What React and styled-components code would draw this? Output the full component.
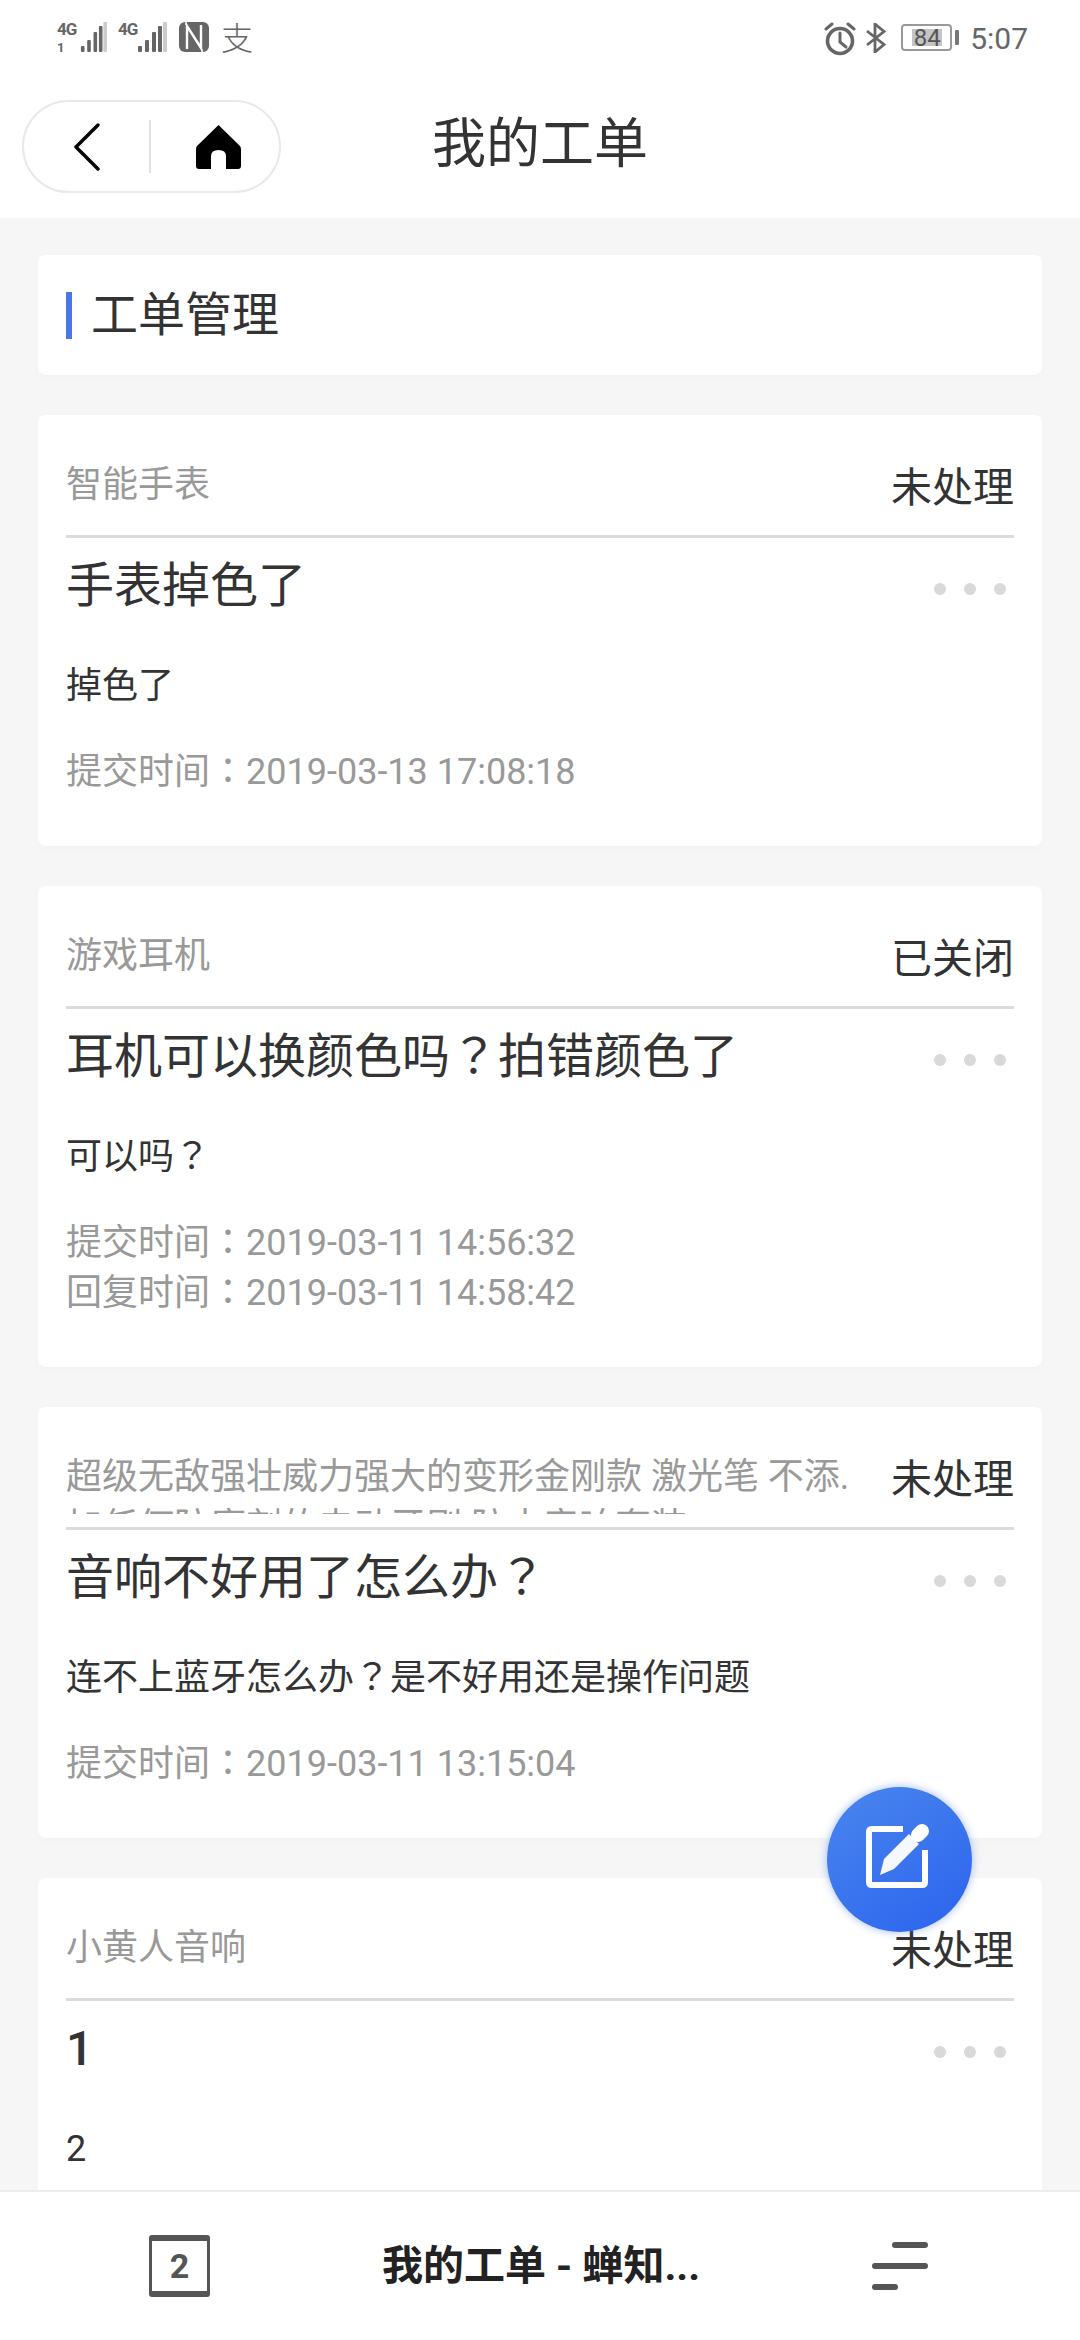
import React from 'react'
import styled, { createGlobalStyle } from 'styled-components'

const GlobalStyle = createGlobalStyle`
  html, body {
    margin: 0;
    padding: 0;
    background: #f6f6f6;
  }
  * { box-sizing: border-box; }
`

const Page = styled.div`
  position: relative;
  width: 1080px;
  height: 2340px;
  display: flex;
  flex-direction: column;
  overflow: hidden;
  background: #f6f6f6;
  color: #333;
  font-family: Roboto, "Noto Sans CJK SC", sans-serif;
`

const StatusBar = styled.div`
  height: 72px;
  flex: none;
  display: flex;
  justify-content: space-between;
  padding: 22px 52px 0 57px;
  background: #fff;
  color: #666;
`

const StatusGroup = styled.div`
  display: flex;
  align-items: flex-start;
`

const Signal = styled.div`
  display: flex;
  align-items: flex-start;
  margin-right: ${p => p.$gap}px;
`

const SignalLabel = styled.div`
  width: ${p => p.$width}px;
  font-size: 17px;
  line-height: 14px;
  font-weight: 700;
  letter-spacing: -1px;
  color: #666;
`

const SimNumber = styled.div`
  margin-top: 7px;
  font-size: 13px;
  line-height: 10px;
`

const PayGlyph = styled.span`
  margin: 1px 0 0 12px;
  font-size: 32px;
  line-height: 32px;
  font-weight: 300;
  color: #666;
`

const Battery = styled.div`
  width: 51px;
  height: 27px;
  margin: 2px 0 0 14px;
  padding: 3px 8px 3px 9px;
  display: flex;
  border: 2px solid #999;
  border-radius: 4px;
`

const BatteryLevel = styled.div`
  flex: 1;
  background: #c4c4c4;
  color: #555;
  font-size: 24px;
  line-height: 18px;
  text-align: center;
`

const BatteryNub = styled.div`
  width: 4px;
  height: 15px;
  margin: 8px 0 0 3px;
  background: #777;
  border-radius: 1px;
`

const Clock = styled.div`
  margin: 1px 0 0 11px;
  font-size: 30px;
  line-height: 32px;
  color: #666;
`

const Header = styled.header`
  height: 146px;
  flex: none;
  display: grid;
  grid-template-columns: 1fr auto 1fr;
  align-items: center;
  padding: 0 22px;
  background: #fff;
`

const NavPill = styled.div`
  width: 259px;
  height: 93px;
  margin-top: 3px;
  display: flex;
  align-items: center;
  border: 2px solid #e9e9e9;
  border-radius: 47px;
`

const BackSlot = styled.div`
  width: 127px;
  height: 53px;
  display: flex;
  align-items: center;
  padding-left: 49px;
  border-right: 2px solid #e2e2e2;
`

const HomeSlot = styled.div`
  flex: 1;
  display: flex;
  justify-content: center;
  padding-left: 6px;
`

const PageTitle = styled.h1`
  margin: 0;
  font-size: 54px;
  line-height: 70px;
  font-weight: 400;
  color: #333;
`

const List = styled.main`
  flex: 1;
  min-height: 0;
  overflow: hidden;
  display: flex;
  flex-direction: column;
  gap: 40px;
  padding: 37px 38px 0;
`

const Panel = styled.section`
  flex: none;
  background: #fff;
  border-radius: 8px;
  box-shadow: 0 4px 14px rgba(0, 0, 0, 0.015);
`

const SectionHead = styled(Panel)`
  height: 120px;
  display: flex;
  align-items: center;
  padding-left: 28px;
`

const AccentBar = styled.div`
  width: 6px;
  height: 47px;
  margin-right: 19px;
  background: #4a77e8;
`

const SectionTitle = styled.h2`
  margin: 0;
  font-size: 47px;
  line-height: 60px;
  font-weight: 400;
  color: #333;
`

const CardHead = styled.div`
  display: flex;
  justify-content: space-between;
  align-items: flex-start;
  margin: 0 28px;
  padding: 45px 0 13px;
  border-bottom: 3px solid #dcdcdc;
`

const Category = styled.div`
  width: 790px;
  height: 62px;
  overflow: hidden;
  font-size: 36px;
  line-height: 50px;
  color: #999;
`

const Status = styled.div`
  margin-top: 3px;
  font-size: 41px;
  line-height: 50px;
  color: #333;
  white-space: nowrap;
`

const CardBody = styled.div`
  padding: 18px 28px 49px;
`

const TitleRow = styled.div`
  display: flex;
  justify-content: space-between;
`

const TicketTitle = styled.div`
  font-size: 48px;
  line-height: 60px;
  color: #333;
  font-weight: ${p => (p.$bold ? 500 : 400)};
`

const Dots = styled.div`
  display: flex;
  gap: 18px;
  margin: 27px 8px 0 0;
`

const Dot = styled.span`
  width: 12px;
  height: 12px;
  border-radius: 50%;
  background: #d9d9d9;
`

const Description = styled.div`
  margin-top: 45px;
  font-size: 36px;
  line-height: 50px;
  color: #333;
`

const Times = styled.div`
  margin-top: 36px;
`

const TimeLine = styled.div`
  font-size: 36px;
  line-height: 50px;
  color: #999;
`

// the ？ and ： sit centred in their cell in the screenshot
const Punct = styled.span`
  font-family: "Noto Sans CJK TC", sans-serif;
  line-height: 0;
`

const Fab = styled.button`
  position: absolute;
  right: 108px;
  bottom: 408px;
  width: 145px;
  height: 145px;
  padding: 0;
  display: flex;
  align-items: center;
  justify-content: center;
  border: none;
  border-radius: 50%;
  background: linear-gradient(145deg, #4a86ee, #2c63ee);
  box-shadow: 0 0 8px rgba(50, 100, 235, 0.45);
`

const BottomBar = styled.footer`
  height: 150px;
  flex: none;
  display: flex;
  align-items: center;
  justify-content: space-between;
  padding: 0 152px 0 149px;
  background: #fff;
  border-top: 2px solid #ececec;
`

const TabCount = styled.div`
  width: 61px;
  height: 62px;
  display: flex;
  align-items: center;
  justify-content: center;
  border-style: solid;
  border-color: #555;
  border-width: 6px 3px;
  border-radius: 3px;
  font-size: 34px;
  font-weight: 700;
  color: #555;
`

const BottomTitle = styled.div`
  font-size: 41px;
  line-height: 56px;
  font-weight: 700;
  color: #222;
`

const MenuLines = styled.div`
  width: 56px;
  display: flex;
  flex-direction: column;
  align-items: flex-end;
  gap: 15px;
`

const MenuLine = styled.div`
  width: ${p => p.$width}px;
  height: 6px;
  margin-right: ${p => p.$inset}px;
  border-radius: 3px;
  background: #555;
`

const SignalBars = ({ width }) => (
  <svg width={width} height="30" viewBox="0 0 30 30" preserveAspectRatio="none">
    <rect x="1" y="24" width="4" height="6" rx="1" fill="#666" />
    <rect x="8" y="18" width="4" height="12" rx="1" fill="#666" />
    <rect x="15" y="10" width="4" height="20" rx="1" fill="#666" />
    <rect x="21" y="4" width="4" height="26" rx="1" fill="#666" />
    <rect x="26" y="0" width="4" height="30" rx="1" fill="#ccc" />
  </svg>
)

const NfcIcon = () => (
  <svg width="30" height="30" viewBox="0 0 30 30" style={{ marginLeft: 12 }}>
    <rect width="30" height="30" rx="6" fill="#666" />
    <path d="M8 27V4L22 26V3" fill="none" stroke="#fff" strokeWidth="2.4" />
    <path d="M7 0V3M23 27V30" stroke="#fff" strokeWidth="1.5" />
  </svg>
)

const AlarmIcon = () => (
  <svg width="32" height="34" viewBox="0 0 32 34" fill="none" stroke="#666" strokeLinecap="round">
    <circle cx="16" cy="19" r="12.5" strokeWidth="3.6" />
    <path d="M16 11V20L22 25" strokeWidth="3" />
    <path d="M2 7L8 2M30 7L24 2" strokeWidth="3" />
  </svg>
)

const BluetoothIcon = () => (
  <svg width="22" height="30" viewBox="0 0 22 30" fill="none" stroke="#666" strokeWidth="2.8" style={{ margin: '1px 0 0 9px' }}>
    <path d="M2 8L19 21.5L10 29V1L19 8.5L2 22" />
  </svg>
)

const BackIcon = () => (
  <svg width="28" height="48" viewBox="0 0 28 48" fill="none" stroke="#000" strokeWidth="3.4" strokeLinecap="round" strokeLinejoin="round">
    <path d="M25 2L3 24L25 46" />
  </svg>
)

const HomeIcon = () => (
  <svg width="45" height="44" viewBox="0 0 45 44">
    <path
      d="M22.5 0L44 21Q45 22 45 25V41Q45 44 42 44H30V31Q30 25 22.5 25Q15 25 15 31V44H3Q0 44 0 41V25Q0 22 1 21Z"
      fill="#000"
    />
  </svg>
)

const EditIcon = () => (
  <svg width="80" height="80" viewBox="0 0 80 80">
    <path d="M43 9H12Q9 9 9 12V62Q9 65 12 65H62Q65 65 65 62V30" fill="none" stroke="#fff" strokeWidth="6" />
    <path d="M20 55L24 39L49 14L59 24L34 49Z" fill="#fff" opacity="0.95" />
    <path d="M58 15L62 11" stroke="#fff" strokeWidth="14" strokeLinecap="round" />
  </svg>
)

const withPunct = text =>
  text.split(/([？：])/).map((part, i) =>
    i % 2 ? <Punct key={i}>{part}</Punct> : part
  )

const tickets = [
  {
    category: ['智能手表'],
    status: '未处理',
    title: '手表掉色了',
    description: '掉色了',
    times: ['提交时间：2019-03-13 17:08:18']
  },
  {
    category: ['游戏耳机'],
    status: '已关闭',
    title: '耳机可以换颜色吗？拍错颜色了',
    description: '可以吗？',
    times: ['提交时间：2019-03-11 14:56:32', '回复时间：2019-03-11 14:58:42']
  },
  {
    category: ['超级无敌强壮威力强大的变形金刚款 激光笔 不添.', '加任何防腐剂的电动牙刷 防水音响套装'],
    status: '未处理',
    title: '音响不好用了怎么办？',
    description: '连不上蓝牙怎么办？是不好用还是操作问题',
    times: ['提交时间：2019-03-11 13:15:04']
  },
  {
    category: ['小黄人音响'],
    status: '未处理',
    title: '1',
    bold: true,
    description: '2',
    times: []
  }
]

const TicketCard = ({ ticket }) => (
  <Panel>
    <CardHead>
      <Category>
        {ticket.category.map(line => <div key={line}>{line}</div>)}
      </Category>
      <Status>{ticket.status}</Status>
    </CardHead>
    <CardBody>
      <TitleRow>
        <TicketTitle $bold={ticket.bold}>{withPunct(ticket.title)}</TicketTitle>
        <Dots><Dot /><Dot /><Dot /></Dots>
      </TitleRow>
      <Description>{withPunct(ticket.description)}</Description>
      {ticket.times.length > 0 && (
        <Times>
          {ticket.times.map(time => <TimeLine key={time}>{withPunct(time)}</TimeLine>)}
        </Times>
      )}
    </CardBody>
  </Panel>
)

const App = () => (
  <Page>
    <GlobalStyle />
    <StatusBar>
      <StatusGroup>
        <Signal $gap={11}>
          <SignalLabel $width={23}>4G<SimNumber>1</SimNumber></SignalLabel>
          <SignalBars width={27} />
        </Signal>
        <Signal $gap={0}>
          <SignalLabel $width={19}>4G</SignalLabel>
          <SignalBars width={30} />
        </Signal>
        <NfcIcon />
        <PayGlyph>支</PayGlyph>
      </StatusGroup>
      <StatusGroup>
        <AlarmIcon />
        <BluetoothIcon />
        <Battery>
          <BatteryLevel>84</BatteryLevel>
        </Battery>
        <BatteryNub />
        <Clock>5:07</Clock>
      </StatusGroup>
    </StatusBar>

    <Header>
      <NavPill>
        <BackSlot><BackIcon /></BackSlot>
        <HomeSlot><HomeIcon /></HomeSlot>
      </NavPill>
      <PageTitle>我的工单</PageTitle>
    </Header>

    <List>
      <SectionHead>
        <AccentBar />
        <SectionTitle>工单管理</SectionTitle>
      </SectionHead>
      {tickets.map(ticket => <TicketCard key={ticket.title} ticket={ticket} />)}
    </List>

    <Fab><EditIcon /></Fab>

    <BottomBar>
      <TabCount>2</TabCount>
      <BottomTitle>我的工单 - 蝉知...</BottomTitle>
      <MenuLines>
        <MenuLine $width={36} $inset={0} />
        <MenuLine $width={56} $inset={0} />
        <MenuLine $width={26} $inset={30} />
      </MenuLines>
    </BottomBar>
  </Page>
)

export default App
